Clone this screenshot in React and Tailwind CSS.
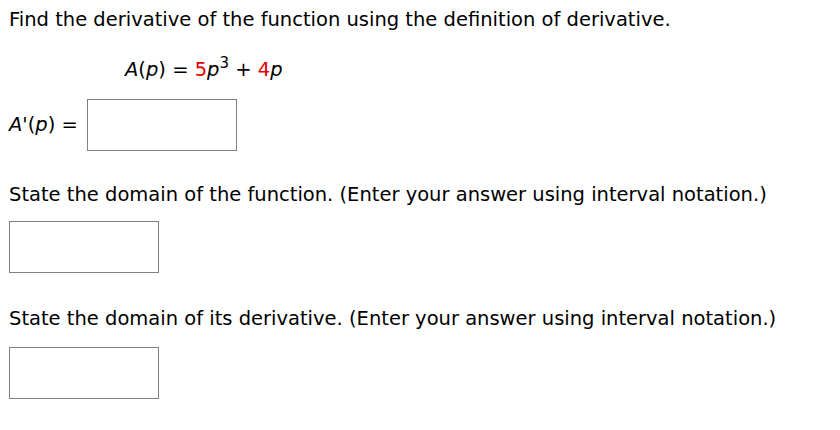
import React from 'react';

const Box = () => (
  <div className="w-[150px] h-[52px] border border-[#808080] bg-white" />
);

export default function App() {
  return (
    <div className="w-[840px] h-[430px] bg-white text-black text-[19.5px] leading-[24px] font-['DejaVu_Sans',Verdana,sans-serif] px-[9px] pt-[8px]">
      <p>Find the derivative of the function using the definition of derivative.</p>

      <div className="mt-[26px] pl-[116px]">
        <i>A</i>(<i>p</i>) = <span className="text-[#e00000]">5</span><i>p</i>
        <span className="relative -top-[8px] text-[15px] leading-none">3</span> + <span className="text-[#e00000]">4</span><i>p</i>
      </div>

      <div className="mt-[17px] flex items-center gap-[9px]">
        <span>
          <i>A</i>'(<i>p</i>) =
        </span>
        <Box />
      </div>

      <p className="mt-[32px]">State the domain of the function. (Enter your answer using interval notation.)</p>
      <div className="mt-[14px]">
        <Box />
      </div>

      <p className="mt-[34px]">State the domain of its derivative. (Enter your answer using interval notation.)</p>
      <div className="mt-[16px]">
        <Box />
      </div>
    </div>
  );
}
